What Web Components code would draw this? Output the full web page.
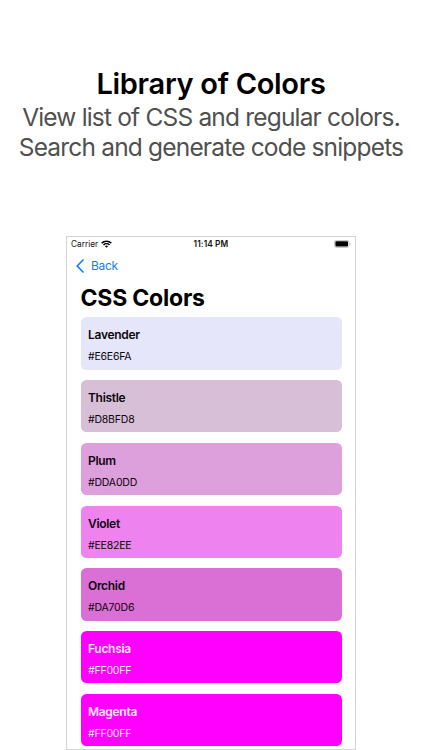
<!DOCTYPE html>
<html lang="en">
<head>
  <meta charset="UTF-8">
  <meta name="viewport" content="width=device-width, initial-scale=1.0">
  <title>Library of Colors</title>
  <style>
    body {
      margin: 0;
      background: #fff;
      font-family: Inter, "Liberation Sans", sans-serif;
    }
  </style>
</head>
<body>
  <promo-page>
    <promo-header slot="header">
      <span slot="title">Library of Colors</span>
      <span slot="line1">View list of CSS and regular colors.</span>
      <span slot="line2">Search and generate code snippets</span>
    </promo-header>
    <phone-screen>
      <status-bar carrier="Carrier" time="11:14 PM"></status-bar>
      <nav-bar back="Back">CSS Colors</nav-bar>
      <color-list>
        <color-card name="Lavender" hex="#E6E6FA"></color-card>
        <color-card name="Thistle" hex="#D8BFD8"></color-card>
        <color-card name="Plum" hex="#DDA0DD"></color-card>
        <color-card name="Violet" hex="#EE82EE"></color-card>
        <color-card name="Orchid" hex="#DA70D6"></color-card>
        <color-card name="Fuchsia" hex="#FF00FF" light></color-card>
        <color-card name="Magenta" hex="#FF00FF" light></color-card>
      </color-list>
    </phone-screen>
  </promo-page>

  <template id="promo-page">
    <style>
      :host {
        display: flex;
        flex-direction: column;
        align-items: center;
        box-sizing: border-box;
        width: 422px;
        height: 750px;
        overflow: hidden;
      }
    </style>
    <slot name="header"></slot>
    <slot></slot>
  </template>

  <template id="promo-header">
    <style>
      :host {
        display: block;
        box-sizing: border-box;
        flex: none;
        width: 422px;
        height: 236px;
        padding-top: 65px;
        text-align: center;
        white-space: nowrap;
      }
      h1 {
        margin: 0;
        font-size: 29px;
        line-height: 37px;
        font-weight: 600;
        letter-spacing: -0.3px;
        color: #000;
      }
      p {
        margin: 0;
        font-size: 24.5px;
        line-height: 30px;
        font-weight: 420;
        letter-spacing: -0.82px;
        color: #505050;
      }
    </style>
    <h1><slot name="title"></slot></h1>
    <p><slot name="line1"></slot></p>
    <p><slot name="line2"></slot></p>
  </template>

  <template id="phone-screen">
    <style>
      :host {
        display: flex;
        flex-direction: column;
        flex: none;
        box-sizing: border-box;
        width: 290px;
        height: 514px;
        border: 1px solid #d4d4d4;
        background: #fff;
        overflow: hidden;
      }
    </style>
    <slot></slot>
  </template>

  <template id="status-bar">
    <style>
      :host {
        display: grid;
        grid-template-columns: 1fr auto 1fr;
        align-items: center;
        height: 13px;
        padding: 0 4px;
        font-size: 8.3px;
        line-height: 13px;
        color: #111;
      }
      .left {
        display: flex;
        align-items: center;
        gap: 3px;
      }
      .carrier,
      .time {
        padding-top: 1px;
        line-height: 12px;
      }
      .time {
        font-weight: 600;
        letter-spacing: 0.12px;
      }
      .battery {
        justify-self: end;
      }
      svg {
        display: block;
      }
    </style>
    <div class="left">
      <span class="carrier"></span>
      <svg width="11" height="8" viewBox="0 0 11 8" fill="none" stroke="#000" stroke-width="1.5">
        <path d="M.7 3.1a6.9 6.9 0 0 1 9.6 0"/>
        <path d="M2.5 5a4.3 4.3 0 0 1 6 0"/>
        <path d="M5.5 7.8 4 6.2a2.2 2.2 0 0 1 3 0z" fill="#000" stroke="none"/>
      </svg>
    </div>
    <span class="time"></span>
    <svg class="battery" width="17" height="8" viewBox="0 0 17 8">
      <rect x=".4" y=".4" width="14.6" height="7" rx="2" fill="#fff" stroke="#b5b5b5" stroke-width=".8"/>
      <rect x="1.4" y="1.3" width="12.6" height="5.2" rx="1" fill="#000"/>
      <path d="M15.9 2.7v2.4c.9-.3.9-2.1 0-2.4z" fill="#999"/>
    </svg>
  </template>

  <template id="nav-bar">
    <style>
      :host {
        display: block;
        height: 67px;
        white-space: nowrap;
      }
      .back {
        display: flex;
        align-items: center;
        gap: 7px;
        height: 31px;
        padding: 0 0 1px 9px;
        font-size: 12px;
        letter-spacing: -0.35px;
        color: #1a7cf0;
      }
      h2 {
        margin: 0;
        padding-left: 13.5px;
        font-size: 23px;
        line-height: 32px;
        font-weight: 700;
        letter-spacing: -0.2px;
        color: #000;
      }
    </style>
    <div class="back">
      <svg width="8" height="14" viewBox="0 0 8 14" fill="none" stroke="currentColor" stroke-width="1.7" stroke-linecap="round" stroke-linejoin="round">
        <path d="M7 1 1.2 7 7 13"/>
      </svg>
      <span class="label"></span>
    </div>
    <h2><slot></slot></h2>
  </template>

  <template id="color-list">
    <style>
      :host {
        display: flex;
        flex-direction: column;
        gap: 10.5px;
        padding: 0.4px 13.5px 0 14px;
      }
    </style>
    <slot></slot>
  </template>

  <template id="color-card">
    <style>
      :host {
        display: block;
        box-sizing: border-box;
        flex: none;
        height: 52.25px;
        padding: 9px 7px 0;
        border-radius: 5.5px;
        color: #0c060c;
        white-space: nowrap;
      }
      :host([light]) {
        color: #ffe6ff;
      }
      .name {
        font-size: 12px;
        line-height: 17px;
        font-weight: 600;
        letter-spacing: -0.3px;
      }
      .hex {
        margin-top: 6px;
        font-size: 10.5px;
        line-height: 16px;
        letter-spacing: -0.2px;
      }
    </style>
    <div class="name"></div>
    <div class="hex"></div>
  </template>

  <script>
    class BaseElement extends HTMLElement {
      constructor() {
        super()
        const tmpl = document.getElementById(this.localName)
        this.attachShadow({ mode: 'open' }).appendChild(tmpl.content.cloneNode(true))
      }
      setText(selector, attr) {
        this.shadowRoot.querySelector(selector).textContent = this.getAttribute(attr) || ''
      }
    }

    class PromoPage extends BaseElement {}
    class PromoHeader extends BaseElement {}
    class PhoneScreen extends BaseElement {}
    class ColorList extends BaseElement {}

    class StatusBar extends BaseElement {
      connectedCallback() {
        this.setText('.carrier', 'carrier')
        this.setText('.time', 'time')
      }
    }

    class NavBar extends BaseElement {
      connectedCallback() {
        this.setText('.label', 'back')
      }
    }

    // background comes straight from the hex attribute
    class ColorCard extends BaseElement {
      connectedCallback() {
        this.setText('.name', 'name')
        this.setText('.hex', 'hex')
        this.style.background = this.getAttribute('hex')
      }
    }

    customElements.define('promo-page', PromoPage)
    customElements.define('promo-header', PromoHeader)
    customElements.define('phone-screen', PhoneScreen)
    customElements.define('status-bar', StatusBar)
    customElements.define('nav-bar', NavBar)
    customElements.define('color-list', ColorList)
    customElements.define('color-card', ColorCard)
  </script>
</body>
</html>
